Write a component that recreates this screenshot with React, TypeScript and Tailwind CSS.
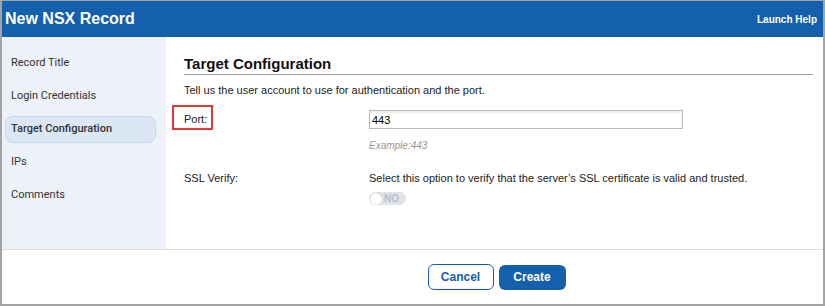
const navItems = ['Record Title', 'Login Credentials', 'Target Configuration', 'IPs', 'Comments']

export default function App() {
  return (
    <div className="w-[825px] h-[306px] bg-[#a3a3a3] pt-px pl-[2px] pr-[2px] pb-[2px] font-['Liberation_Sans',Arial,sans-serif]">
      <div className="h-full bg-white flex flex-col">
        {/* header */}
        <div className="h-[36px] shrink-0 bg-[#1560ac] flex items-center justify-between pl-[3px] pr-[6px]">
          <h1 className="text-[16px] font-bold text-white">New NSX Record</h1>
          <span className="text-[10px] font-bold text-white">Launch Help</span>
        </div>

        {/* body */}
        <div className="h-[212px] shrink-0 flex">
          <nav className="w-[164px] shrink-0 bg-[#edf2f9] pt-[13px] pl-[3px] pr-[10px] flex flex-col gap-[6px] font-['Roboto',sans-serif]">
            {navItems.map(item => (
              <div
                key={item}
                className={
                  item === 'Target Configuration'
                    ? 'h-[27px] flex items-center pl-[5px] text-[11px] font-medium text-[#333] bg-[#dce7f5] border border-[#c9d7ea] rounded-lg'
                    : 'h-[27px] flex items-center pl-[5px] text-[11px] text-[#333] border border-transparent'
                }
              >
                {item}
              </div>
            ))}
          </nav>

          <div className="flex-1 pl-[18px] pr-[10px] pt-[17px] text-[#222]">
            <h2 className="text-[15px] font-bold text-[#111] leading-[20px] border-b border-[#999]">
              Target Configuration
            </h2>
            <p className="text-[11px] mt-[8px] leading-[14px]">
              Tell us the user account to use for authentication and the port.
            </p>

            <div className="flex mt-[13px]">
              <div className="w-[185px] relative">
                <span className="text-[11px] leading-[19px] block">Port:</span>
                <div className="absolute -left-[12px] -top-[5px] w-[41px] h-[25px] border-2 border-[#e53935]" />
              </div>
              <div>
                <input
                  readOnly
                  value="443"
                  className="block w-[314px] h-[19px] border border-[#bbb] px-[2px] text-[11px] text-black outline-none shadow-[inset_0_2px_3px_rgba(0,0,0,0.08)]"
                />
                <div className="text-[10px] leading-[12px] italic text-[#999] mt-[11px]">Example:443</div>
              </div>
            </div>

            <div className="flex mt-[19px]">
              <div className="w-[185px] text-[11px] leading-[14px]">SSL Verify:</div>
              <div>
                <div className="text-[11px] leading-[14px]">
                  Select this option to verify that the server’s SSL certificate is valid and trusted.
                </div>
                <div className="mt-[7px] w-[37px] h-[13px] rounded-full bg-[#dfe3e8] flex items-center">
                  <span className="w-[12px] h-[12px] rounded-full bg-white ml-px shadow-[0_0_1px_rgba(0,0,0,0.3)]" />
                  <span className="text-[10px] font-bold text-[#b9c0c8] ml-[2px] leading-none">NO</span>
                </div>
              </div>
            </div>
          </div>
        </div>

        {/* footer */}
        <div className="flex-1 border-t border-[#ddd] flex items-center justify-center gap-[5px] pl-[168px]">
          <button className="w-[66px] h-[26px] rounded-md border border-[#1560ac] bg-white text-[12px] font-bold text-[#1560ac]">
            Cancel
          </button>
          <button className="w-[67px] h-[25px] rounded-md bg-[#1560ac] text-[12px] font-bold text-white">
            Create
          </button>
        </div>
      </div>
    </div>
  )
}
